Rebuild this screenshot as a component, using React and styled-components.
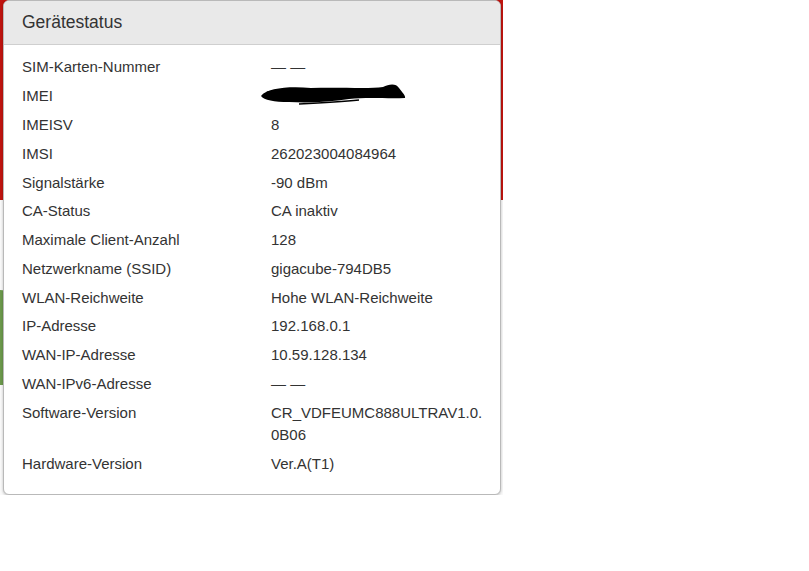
import React from 'react';
import styled, { createGlobalStyle } from 'styled-components';

const GlobalStyle = createGlobalStyle`
  html, body {
    margin: 0;
    padding: 0;
    background: #ffffff;
  }
  body {
    font-family: "Liberation Sans", Arial, sans-serif;
    color: #333;
  }
`;

const rows = [
  { label: 'SIM-Karten-Nummer', value: '— —' },
  { label: 'IMEI', redacted: true },
  { label: 'IMEISV', value: '8' },
  { label: 'IMSI', value: '262023004084964' },
  { label: 'Signalstärke', value: '-90 dBm' },
  { label: 'CA-Status', value: 'CA inaktiv' },
  { label: 'Maximale Client-Anzahl', value: '128' },
  { label: 'Netzwerkname (SSID)', value: 'gigacube-794DB5' },
  { label: 'WLAN-Reichweite', value: 'Hohe WLAN-Reichweite' },
  { label: 'IP-Adresse', value: '192.168.0.1' },
  { label: 'WAN-IP-Adresse', value: '10.59.128.134' },
  { label: 'WAN-IPv6-Adresse', value: '— —' },
  { label: 'Software-Version', value: 'CR_VDFEUMC888ULTRAV1.0.0B06' },
  { label: 'Hardware-Version', value: 'Ver.A(T1)' },
];

const Page = styled.div`
  position: relative;
  width: 503px;
  height: 495px;
  background: linear-gradient(180deg, #c0140f 0, #c0140f 200px, #fafafa 200px);
  overflow: hidden;
`;

const GreenBlob = styled.div`
  position: absolute;
  left: -30px;
  top: 290px;
  width: 60px;
  height: 95px;
  border-radius: 50%;
  background: #6c9a4c;
`;

const Modal = styled.div`
  position: absolute;
  left: 3px;
  top: 0;
  width: 496px;
  height: 493px;
  background: #fff;
  border: 1px solid #b9b9b9;
  border-radius: 6px;
  box-shadow: 0 1px 3px rgba(0, 0, 0, 0.25);
  overflow: hidden;
  display: flex;
  flex-direction: column;
`;

const Header = styled.div`
  height: 43px;
  flex-shrink: 0;
  display: flex;
  align-items: center;
  padding: 0 18px;
  background: #e9e9e9;
  border-bottom: 1px solid #cfcfcf;
  font-size: 17.5px;
  color: #333;
`;

const Body = styled.div`
  padding: 8px 18px 0 18px;
`;

const Row = styled.div`
  display: grid;
  grid-template-columns: 249px 212px;
  padding: 3.4px 0;
  font-size: 15px;
  line-height: 22px;
`;

const Label = styled.div`
  color: #333;
`;

const Value = styled.div`
  color: #333;
  word-break: break-all;
  position: relative;
`;

const Redaction = styled.svg`
  position: absolute;
  left: -12px;
  top: -3px;
`;

const Scribble = () => (
  <Redaction width="150" height="26" viewBox="0 0 150 26">
    <path
      d="M2 14 C 8 6, 30 4, 52 6 C 80 5, 110 7, 124 5 C 130 2, 137 1, 140 6 C 143 10, 147 14, 146 16 C 130 17, 110 15, 90 17 C 70 20, 50 21, 30 20 C 15 20, 5 18, 2 14 Z"
      fill="#000"
    />
    <path d="M8 11 C 30 7, 60 8, 90 10" stroke="#000" strokeWidth="3" fill="none" />
    <path d="M20 17 C 50 16, 90 13, 130 12" stroke="#000" strokeWidth="2.5" fill="none" />
    <path d="M40 22 C 60 21, 80 20, 100 18" stroke="#000" strokeWidth="1.5" fill="none" />
  </Redaction>
);

const App = () => (
  <>
    <GlobalStyle />
    <Page>
      <GreenBlob />
      <Modal>
        <Header>Gerätestatus</Header>
        <Body>
          {rows.map((r) => (
            <Row key={r.label}>
              <Label>{r.label}</Label>
              <Value>{r.redacted ? <Scribble /> : r.value}</Value>
            </Row>
          ))}
        </Body>
      </Modal>
    </Page>
  </>
);

export default App;
